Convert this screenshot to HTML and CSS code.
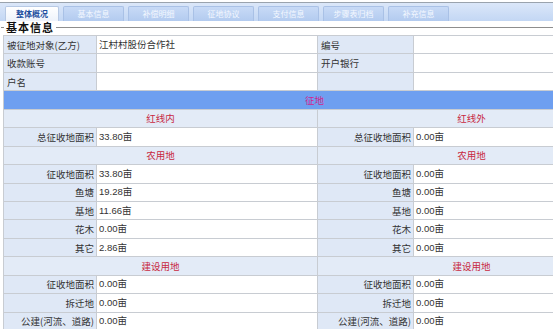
FILE: index.html
```html
<!DOCTYPE html>
<html lang="zh-CN">
<head>
    <meta charset="UTF-8">
    <title>整体概况</title>
    <link rel="stylesheet" href="styles.css">
</head>
<body>

<div class="tabbar">
    <a class="tab active">整体概况</a>
    <a class="tab">基本信息</a>
    <a class="tab">补偿明细</a>
    <a class="tab">征地协议</a>
    <a class="tab">支付信息</a>
    <a class="tab">步骤表归档</a>
    <a class="tab">补充信息</a>
</div>

<fieldset class="panel">
    <legend>基本信息</legend>
    <table class="info">
        <colgroup>
            <col class="c-label">
            <col class="c-value">
            <col class="c-label2">
            <col class="c-value2">
        </colgroup>
        <!-- 基本信息 -->
        <tr>
            <th class="left">被征地对象(乙方)</th>
            <td>江村村股份合作社</td>
            <th class="left">编号</th>
            <td></td>
        </tr>
        <tr>
            <th class="left">收款账号</th>
            <td></td>
            <th class="left">开户银行</th>
            <td></td>
        </tr>
        <tr>
            <th class="left">户名</th>
            <td></td>
            <th class="left"></th>
            <td></td>
        </tr>

        <!-- 征地 -->
        <tr class="band"><td colspan="4">征地</td></tr>
        <tr class="sub">
            <td colspan="2">红线内</td>
            <td colspan="2">红线外</td>
        </tr>
        <tr>
            <th>总征收地面积</th><td>33.80亩</td>
            <th>总征收地面积</th><td>0.00亩</td>
        </tr>

        <tr class="sub">
            <td colspan="2">农用地</td>
            <td colspan="2">农用地</td>
        </tr>
        <tr><th>征收地面积</th><td>33.80亩</td><th>征收地面积</th><td>0.00亩</td></tr>
        <tr><th>鱼塘</th><td>19.28亩</td><th>鱼塘</th><td>0.00亩</td></tr>
        <tr><th>基地</th><td>11.66亩</td><th>基地</th><td>0.00亩</td></tr>
        <tr><th>花木</th><td>0.00亩</td><th>花木</th><td>0.00亩</td></tr>
        <tr><th>其它</th><td>2.86亩</td><th>其它</th><td>0.00亩</td></tr>

        <tr class="sub">
            <td colspan="2">建设用地</td>
            <td colspan="2">建设用地</td>
        </tr>
        <tr><th>征收地面积</th><td>0.00亩</td><th>征收地面积</th><td>0.00亩</td></tr>
        <tr><th>拆迁地</th><td>0.00亩</td><th>拆迁地</th><td>0.00亩</td></tr>
        <tr><th>公建(河流、道路)</th><td>0.00亩</td><th>公建(河流、道路)</th><td>0.00亩</td></tr>
    </table>
</fieldset>

</body>
</html>
```

FILE: styles.css
```css
html, body {
    overflow: hidden;
}
body {
    margin: 0;
    font-family: "Noto Sans CJK SC", "DejaVu Sans", sans-serif;
    font-size: 9.5px;
    color: #333;
    background: #fff;
}
.tabbar {
    height: 18px;
    margin-top: 2px;
    padding-left: 5px;
    border-top: 1px solid #9aa3ad;
    background: linear-gradient(#dbe7f9, #c3d7f4);
    display: flex;
    align-items: flex-end;
    gap: 4px;
}
.tab {
    width: 59px;
    height: 14px;
    line-height: 14px;
    text-align: center;
    font-size: 8px;
    color: #f4f8ff;
    background: linear-gradient(#c8daf6, #b3cbef);
    border: 1px solid #a9c1e6;
    border-bottom: none;
    border-radius: 2px 2px 0 0;
}
.tab.active {
    width: 52px;
    color: #1d4f9e;
    font-weight: bold;
    background: linear-gradient(#ffffff, #eef3fb);
    border-color: #b7c9e4;
}
.panel {
    margin: 0 0 0 1px;
    padding: 0 0 0 2px;
    border: none;
    border-top: 1px solid #8e8e8e;
    min-width: 0;
}
.panel legend {
    padding: 0 2px;
    margin-left: 1px;
    font-size: 11px;
    line-height: 13px;
    font-weight: bold;
    color: #111;
    letter-spacing: 1px;
}
.info {
    width: 622px;
    border-collapse: collapse;
    table-layout: fixed;
    margin-top: 1px;
}
.c-label { width: 93px; }
.c-value { width: 221px; }
.c-label2 { width: 96px; }
.c-value2 { width: 212px; }
.info th,
.info td {
    height: 17.45px;
    padding: 0 2px;
    line-height: 12px;
    border: 1px solid #c8ccd2;
    white-space: nowrap;
    overflow: hidden;
    font-weight: normal;
    text-align: left;
}
.info th {
    background: #dfe8f6;
    text-align: right;
    color: #333;
}
.info th.left {
    text-align: left;
    padding-left: 3px;
}
.info td {
    background: #fff;
    font-family: "Liberation Sans", "Noto Sans CJK SC", sans-serif;
    font-size: 9.5px;
}
.info .band td {
    background: #6e9ff0;
    color: #d0258e;
    text-align: center;
    font-family: "Noto Sans CJK SC", sans-serif;
}
.info .sub td {
    background: #e3ebf7;
    color: #c8283f;
    text-align: center;
    font-family: "Noto Sans CJK SC", sans-serif;
}
```
